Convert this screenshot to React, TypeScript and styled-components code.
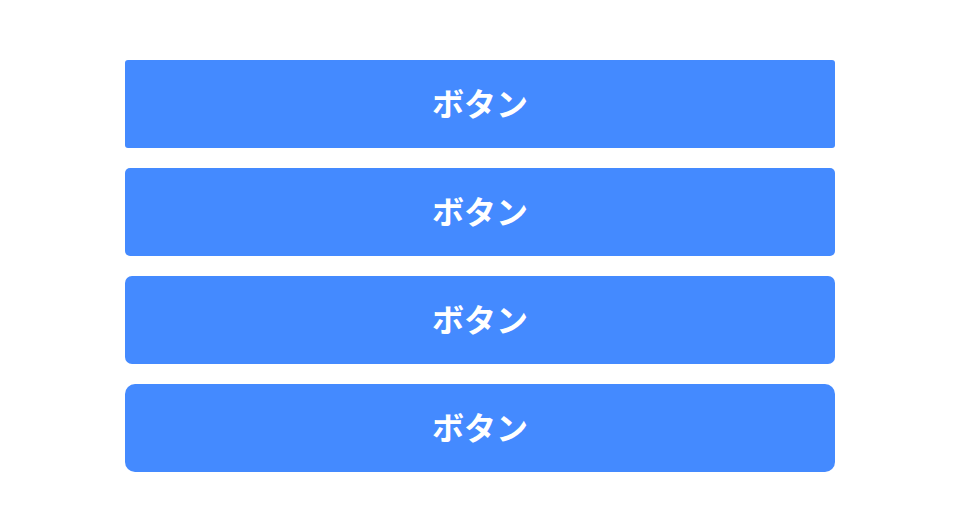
import React from 'react';
import styled, { createGlobalStyle } from 'styled-components';

const GlobalStyle = createGlobalStyle`
  html, body {
    margin: 0;
    padding: 0;
    background: #fff;
  }
  body {
    font-family: 'Noto Sans CJK JP', 'Noto Sans', sans-serif;
  }
`;

const Page = styled.div`
  display: flex;
  flex-direction: column;
  align-items: center;
  gap: 20px;
  padding-top: 60px;
`;

type ButtonProps = { $radius: number };
const Button = styled.button<ButtonProps>`
  width: 710px;
  height: 88px;
  border: none;
  border-radius: ${(props) => props.$radius}px;
  background-color: #448aff;
  color: #fff;
  font-family: 'Noto Sans CJK JP', sans-serif;
  font-size: 32px;
  font-weight: 700;
  line-height: 1;
  display: flex;
  align-items: center;
  justify-content: center;
  padding: 0 0 5px;
  cursor: pointer;
`;

const radii = [3, 5, 7, 10];

function App() {
  return (
    <>
      <GlobalStyle />
      <Page>
        {radii.map((r) => (
          <Button key={r} $radius={r}>
            ボタン
          </Button>
        ))}
      </Page>
    </>
  );
}

export default App;
